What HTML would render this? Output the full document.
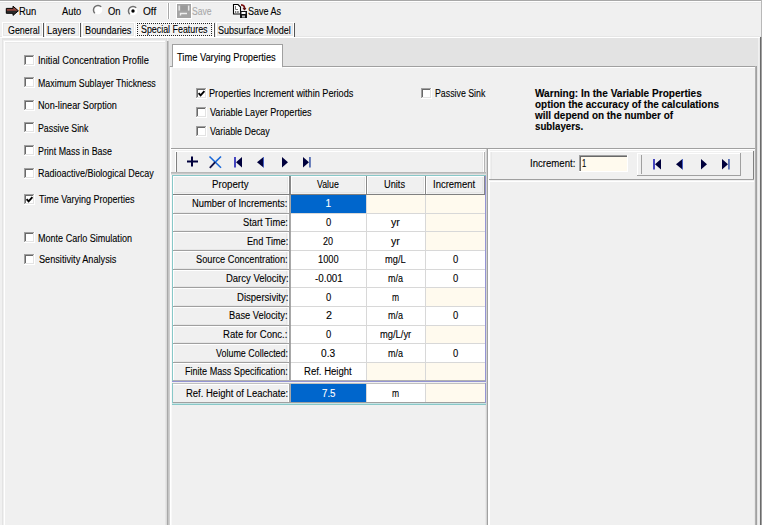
<!DOCTYPE html>
<html><head><meta charset="utf-8"><style>
html,body{margin:0;padding:0}
body{width:763px;height:525px;overflow:hidden;position:relative;background:#f0f0f0;font-family:'Liberation Sans', sans-serif;font-size:10px}
body>div,body>span{position:absolute}
span{white-space:nowrap;line-height:12px;-webkit-text-stroke:0.1px currentColor}
</style></head><body>
<div style="left:0px;top:0px;width:763px;height:1px;background:#a8a8a8;"></div>
<div style="left:0px;top:1px;width:761px;height:1px;background:#ffffff;"></div>
<div style="left:0px;top:2px;width:761px;height:1px;background:#e8e8e8;"></div>
<div style="left:761px;top:0px;width:1px;height:37px;background:#b8b8b8;"></div>
<div style="left:762px;top:0px;width:1px;height:525px;background:#ffffff;"></div>
<svg style="position:absolute;left:5px;top:5px;overflow:visible" width="15" height="12" viewBox="0 0 15 12"><defs><linearGradient id="ag" x1="0" y1="0" x2="0" y2="1"><stop offset="0" stop-color="#a05a50"/><stop offset="0.45" stop-color="#8a4038"/><stop offset="0.55" stop-color="#262626"/><stop offset="1" stop-color="#3a3a3a"/></linearGradient></defs><path d="M1.3 3.4 L8 3.4 L8 1.2 L13.4 5.8 L8 10.4 L8 8.3 L1.3 8.3 Z" fill="url(#ag)" stroke="#000" stroke-width="1" stroke-linejoin="miter"/></svg>
<span style="left:19.06px;top:6px;font-weight:normal;font-size:10.0px;color:#000;transform:scaleX(0.9412);transform-origin:0 0">Run</span>
<span style="left:61.60px;top:6px;font-weight:normal;font-size:10.0px;color:#000;transform:scaleX(0.9300);transform-origin:0 0">Auto</span>
<svg style="position:absolute;left:92.4px;top:4.4px;overflow:visible" width="12" height="12" viewBox="0 0 12 12"><circle cx="6" cy="6" r="4.3" fill="#fff"/><path d="M2.8 9.2 A4.5 4.5 0 0 1 9.2 2.8" fill="none" stroke="#707070" stroke-width="1.5"/></svg>
<span style="left:107.90px;top:6px;font-weight:normal;font-size:10.0px;color:#000;transform:scaleX(0.9385);transform-origin:0 0">On</span>
<svg style="position:absolute;left:127.4px;top:4.5px;overflow:visible" width="12" height="12" viewBox="0 0 12 12"><circle cx="6" cy="6" r="4.3" fill="#fff"/><path d="M2.8 9.2 A4.5 4.5 0 0 1 9.2 2.8" fill="none" stroke="#707070" stroke-width="1.5"/><circle cx="6" cy="6" r="1.7" fill="#000"/></svg>
<span style="left:142.70px;top:6px;font-weight:normal;font-size:10.0px;color:#000;transform:scaleX(1.0071);transform-origin:0 0">Off</span>
<div style="left:167px;top:3px;width:1px;height:16px;background:#ffffff;"></div>
<div style="left:168px;top:3px;width:1px;height:16px;background:#a8a8a8;"></div>
<div style="left:169px;top:3px;width:1px;height:16px;background:#ffffff;"></div>
<svg style="position:absolute;left:176px;top:3px;overflow:visible" width="16" height="16" viewBox="0 0 16 16"><rect x="0.5" y="0.5" width="15" height="15" fill="none" stroke="#fff" stroke-width="1"/><rect x="1" y="1" width="14" height="14" fill="#a4a4a4"/><rect x="2.5" y="2.6" width="1.4" height="5" fill="#e8e8e8"/><rect x="12" y="2.6" width="1.4" height="5" fill="#e8e8e8"/><rect x="5" y="2.5" width="6" height="5" fill="#9a9a9a"/><path d="M4.5 12.5 L4.5 10.5 L11 10.5" fill="none" stroke="#f0f0f0" stroke-width="1.4"/></svg>
<span style="left:192.00px;top:6px;font-weight:normal;font-size:10.0px;color:#a8a8a8;transform:scaleX(0.8565);transform-origin:0 0">Save</span>
<svg style="position:absolute;left:232px;top:3px;overflow:visible" width="16" height="16" viewBox="0 0 16 16"><path d="M1.5 1.5 L6 1.5 L8.5 4 L8.5 11 L1.5 11 Z" fill="#fff" stroke="#000" stroke-width="1.1"/><path d="M3.5 3 L3.5 6.5 L6 6.5" fill="none" stroke="#777" stroke-width="1"/><rect x="3" y="8.4" width="1.3" height="1.2" fill="#222"/><rect x="5.2" y="8.4" width="1.5" height="1.2" fill="#222"/><path d="M9 1.8 Q13 1.8 12.5 6.5" fill="none" stroke="#7a1010" stroke-width="1.8"/><path d="M10.5 5 L12.6 7.5 L14.4 5" fill="#5a1010"/><rect x="8" y="8" width="7" height="7" fill="#111"/><rect x="9.5" y="9" width="4" height="2" fill="#fff"/><rect x="10" y="12.5" width="3" height="2" fill="#bbb"/></svg>
<span style="left:247.50px;top:6px;font-weight:normal;font-size:10.0px;color:#000;transform:scaleX(0.9000);transform-origin:0 0">Save As</span>
<div style="left:0px;top:36px;width:761px;height:1px;background:#e6e6e6;"></div>
<div style="left:2px;top:22px;width:41px;height:15px;background:transparent;border:1px solid #ffffff;box-sizing:border-box"></div>
<div style="left:3px;top:23px;width:39px;height:13px;background:transparent;border:1px solid #e6e6e6;box-sizing:border-box"></div>
<div style="left:45px;top:22px;width:35px;height:15px;background:transparent;border:1px solid #ffffff;box-sizing:border-box"></div>
<div style="left:46px;top:23px;width:33px;height:13px;background:transparent;border:1px solid #e6e6e6;box-sizing:border-box"></div>
<div style="left:82px;top:22px;width:53px;height:15px;background:transparent;border:1px solid #ffffff;box-sizing:border-box"></div>
<div style="left:83px;top:23px;width:51px;height:13px;background:transparent;border:1px solid #e6e6e6;box-sizing:border-box"></div>
<div style="left:216px;top:22px;width:78px;height:15px;background:transparent;border:1px solid #ffffff;box-sizing:border-box"></div>
<div style="left:217px;top:23px;width:76px;height:13px;background:transparent;border:1px solid #e6e6e6;box-sizing:border-box"></div>
<div style="left:43px;top:23px;width:1px;height:14px;background:#555555;"></div>
<div style="left:80px;top:23px;width:1px;height:14px;background:#555555;"></div>
<div style="left:214px;top:23px;width:1px;height:14px;background:#555555;"></div>
<div style="left:294px;top:23px;width:1px;height:14px;background:#555555;"></div>
<span style="left:7.50px;top:25px;font-weight:normal;font-size:10.0px;color:#000;transform:scaleX(0.8886);transform-origin:0 0">General</span>
<span style="left:47.36px;top:25px;font-weight:normal;font-size:10.0px;color:#000;transform:scaleX(0.9414);transform-origin:0 0">Layers</span>
<span style="left:84.58px;top:25px;font-weight:normal;font-size:10.0px;color:#000;transform:scaleX(0.9184);transform-origin:0 0">Boundaries</span>
<div style="left:136px;top:22px;width:78px;height:15px;background:#f4f4f4;border:1px solid #ffffff;box-sizing:border-box"></div>
<div style="left:137px;top:23px;width:75px;height:13px;background:transparent;border:1px dotted #222;box-sizing:border-box"></div>
<span style="left:141.00px;top:24px;font-weight:normal;font-size:10.0px;color:#000;transform:scaleX(0.8867);transform-origin:0 0">Special Features</span>
<span style="left:217.80px;top:25px;font-weight:normal;font-size:10.0px;color:#000;transform:scaleX(0.9025);transform-origin:0 0">Subsurface Model</span>
<div style="left:0px;top:37px;width:760px;height:1px;background:#ffffff;"></div>
<div style="left:760px;top:37px;width:1px;height:488px;background:#6a6a6a;"></div>
<div style="left:761px;top:37px;width:1px;height:488px;background:#a0a0a0;"></div>
<div style="left:758px;top:38px;width:1px;height:487px;background:#f0f0f0;"></div>
<div style="left:759px;top:38px;width:1px;height:487px;background:#e8e8e8;"></div>
<div style="left:2px;top:38px;width:164px;height:1px;background:#e3e3e3;"></div>
<div style="left:2px;top:39px;width:164px;height:1px;background:#e3e3e3;"></div>
<div style="left:2px;top:38px;width:1px;height:487px;background:#e3e3e3;"></div>
<div style="left:4px;top:41px;width:161px;height:1px;background:#ffffff;"></div>
<div style="left:4px;top:41px;width:1px;height:484px;background:#ffffff;"></div>
<div style="left:5px;top:42px;width:160px;height:1px;background:#e8e8e8;"></div>
<div style="left:165px;top:38px;width:1px;height:487px;background:#e6e6e6;"></div>
<div style="left:24px;top:55px;width:11px;height:11px;background:#ffffff;"></div>
<div style="left:24px;top:55px;width:10px;height:1px;background:#a0a0a0;"></div>
<div style="left:24px;top:55px;width:1px;height:10px;background:#a0a0a0;"></div>
<div style="left:25px;top:56px;width:8px;height:1px;background:#696969;"></div>
<div style="left:25px;top:56px;width:1px;height:8px;background:#696969;"></div>
<div style="left:25px;top:64px;width:9px;height:1px;background:#e3e3e3;"></div>
<div style="left:33px;top:56px;width:1px;height:9px;background:#e3e3e3;"></div>
<span style="left:37.57px;top:55px;font-weight:normal;font-size:10.0px;color:#000;transform:scaleX(0.9271);transform-origin:0 0">Initial Concentration Profile</span>
<div style="left:24px;top:77px;width:11px;height:11px;background:#ffffff;"></div>
<div style="left:24px;top:77px;width:10px;height:1px;background:#a0a0a0;"></div>
<div style="left:24px;top:77px;width:1px;height:10px;background:#a0a0a0;"></div>
<div style="left:25px;top:78px;width:8px;height:1px;background:#696969;"></div>
<div style="left:25px;top:78px;width:1px;height:8px;background:#696969;"></div>
<div style="left:25px;top:86px;width:9px;height:1px;background:#e3e3e3;"></div>
<div style="left:33px;top:78px;width:1px;height:9px;background:#e3e3e3;"></div>
<span style="left:37.62px;top:78px;font-weight:normal;font-size:10.0px;color:#000;transform:scaleX(0.8841);transform-origin:0 0">Maximum Sublayer Thickness</span>
<div style="left:24px;top:100px;width:11px;height:11px;background:#ffffff;"></div>
<div style="left:24px;top:100px;width:10px;height:1px;background:#a0a0a0;"></div>
<div style="left:24px;top:100px;width:1px;height:10px;background:#a0a0a0;"></div>
<div style="left:25px;top:101px;width:8px;height:1px;background:#696969;"></div>
<div style="left:25px;top:101px;width:1px;height:8px;background:#696969;"></div>
<div style="left:25px;top:109px;width:9px;height:1px;background:#e3e3e3;"></div>
<div style="left:33px;top:101px;width:1px;height:9px;background:#e3e3e3;"></div>
<span style="left:37.58px;top:100px;font-weight:normal;font-size:10.0px;color:#000;transform:scaleX(0.9165);transform-origin:0 0">Non-linear Sorption</span>
<div style="left:24px;top:122px;width:11px;height:11px;background:#ffffff;"></div>
<div style="left:24px;top:122px;width:10px;height:1px;background:#a0a0a0;"></div>
<div style="left:24px;top:122px;width:1px;height:10px;background:#a0a0a0;"></div>
<div style="left:25px;top:123px;width:8px;height:1px;background:#696969;"></div>
<div style="left:25px;top:123px;width:1px;height:8px;background:#696969;"></div>
<div style="left:25px;top:131px;width:9px;height:1px;background:#e3e3e3;"></div>
<div style="left:33px;top:123px;width:1px;height:9px;background:#e3e3e3;"></div>
<span style="left:37.62px;top:123px;font-weight:normal;font-size:10.0px;color:#000;transform:scaleX(0.8804);transform-origin:0 0">Passive Sink</span>
<div style="left:24px;top:145px;width:11px;height:11px;background:#ffffff;"></div>
<div style="left:24px;top:145px;width:10px;height:1px;background:#a0a0a0;"></div>
<div style="left:24px;top:145px;width:1px;height:10px;background:#a0a0a0;"></div>
<div style="left:25px;top:146px;width:8px;height:1px;background:#696969;"></div>
<div style="left:25px;top:146px;width:1px;height:8px;background:#696969;"></div>
<div style="left:25px;top:154px;width:9px;height:1px;background:#e3e3e3;"></div>
<div style="left:33px;top:146px;width:1px;height:9px;background:#e3e3e3;"></div>
<span style="left:37.61px;top:146px;font-weight:normal;font-size:10.0px;color:#000;transform:scaleX(0.8854);transform-origin:0 0">Print Mass in Base</span>
<div style="left:24px;top:168px;width:11px;height:11px;background:#ffffff;"></div>
<div style="left:24px;top:168px;width:10px;height:1px;background:#a0a0a0;"></div>
<div style="left:24px;top:168px;width:1px;height:10px;background:#a0a0a0;"></div>
<div style="left:25px;top:169px;width:8px;height:1px;background:#696969;"></div>
<div style="left:25px;top:169px;width:1px;height:8px;background:#696969;"></div>
<div style="left:25px;top:177px;width:9px;height:1px;background:#e3e3e3;"></div>
<div style="left:33px;top:169px;width:1px;height:9px;background:#e3e3e3;"></div>
<span style="left:37.60px;top:168px;font-weight:normal;font-size:10.0px;color:#000;transform:scaleX(0.8977);transform-origin:0 0">Radioactive/Biological Decay</span>
<div style="left:24px;top:194px;width:11px;height:11px;background:#ffffff;"></div>
<div style="left:24px;top:194px;width:10px;height:1px;background:#a0a0a0;"></div>
<div style="left:24px;top:194px;width:1px;height:10px;background:#a0a0a0;"></div>
<div style="left:25px;top:195px;width:8px;height:1px;background:#696969;"></div>
<div style="left:25px;top:195px;width:1px;height:8px;background:#696969;"></div>
<div style="left:25px;top:203px;width:9px;height:1px;background:#e3e3e3;"></div>
<div style="left:33px;top:195px;width:1px;height:9px;background:#e3e3e3;"></div>
<svg style="position:absolute;left:24px;top:194px;overflow:visible" width="11" height="11" viewBox="0 0 11 11"><path d="M2.6 5.2 L4.6 7.4 L8.4 3.2" fill="none" stroke="#000" stroke-width="1.9"/></svg>
<span style="left:38.50px;top:194px;font-weight:normal;font-size:10.0px;color:#000;transform:scaleX(0.8991);transform-origin:0 0">Time Varying Properties</span>
<div style="left:24px;top:232px;width:11px;height:11px;background:#ffffff;"></div>
<div style="left:24px;top:232px;width:10px;height:1px;background:#a0a0a0;"></div>
<div style="left:24px;top:232px;width:1px;height:10px;background:#a0a0a0;"></div>
<div style="left:25px;top:233px;width:8px;height:1px;background:#696969;"></div>
<div style="left:25px;top:233px;width:1px;height:8px;background:#696969;"></div>
<div style="left:25px;top:241px;width:9px;height:1px;background:#e3e3e3;"></div>
<div style="left:33px;top:233px;width:1px;height:9px;background:#e3e3e3;"></div>
<span style="left:37.60px;top:233px;font-weight:normal;font-size:10.0px;color:#000;transform:scaleX(0.9039);transform-origin:0 0">Monte Carlo Simulation</span>
<div style="left:24px;top:254px;width:11px;height:11px;background:#ffffff;"></div>
<div style="left:24px;top:254px;width:10px;height:1px;background:#a0a0a0;"></div>
<div style="left:24px;top:254px;width:1px;height:10px;background:#a0a0a0;"></div>
<div style="left:25px;top:255px;width:8px;height:1px;background:#696969;"></div>
<div style="left:25px;top:255px;width:1px;height:8px;background:#696969;"></div>
<div style="left:25px;top:263px;width:9px;height:1px;background:#e3e3e3;"></div>
<div style="left:33px;top:255px;width:1px;height:9px;background:#e3e3e3;"></div>
<span style="left:38.50px;top:254px;font-weight:normal;font-size:10.0px;color:#000;transform:scaleX(0.9155);transform-origin:0 0">Sensitivity Analysis</span>
<div style="left:166px;top:38px;width:1px;height:487px;background:#dcdcdc;"></div>
<div style="left:168px;top:38px;width:590px;height:28px;background:#e3e3e3;"></div>
<div style="left:167px;top:41px;width:1px;height:484px;background:#a8a8a8;"></div>
<div style="left:168px;top:41px;width:1px;height:484px;background:#c4c4c4;"></div>
<div style="left:169px;top:66px;width:1px;height:459px;background:#d0d0d0;"></div>
<div style="left:172px;top:44px;width:111px;height:23px;background:#ffffff;"></div>
<div style="left:172px;top:44px;width:111px;height:1px;background:#a0a0a0;"></div>
<div style="left:172px;top:44px;width:1px;height:23px;background:#a0a0a0;"></div>
<div style="left:282px;top:44px;width:1px;height:23px;background:#a0a0a0;"></div>
<span style="left:177.40px;top:52px;font-weight:normal;font-size:10.0px;color:#000;transform:scaleX(0.9302);transform-origin:0 0">Time Varying Properties</span>
<div style="left:170px;top:66px;width:2px;height:1px;background:#a0a0a0;"></div>
<div style="left:283px;top:66px;width:474px;height:1px;background:#a0a0a0;"></div>
<div style="left:173px;top:67px;width:109px;height:1px;background:#ffffff;"></div>
<div style="left:170px;top:67px;width:2px;height:1px;background:#ffffff;"></div>
<div style="left:283px;top:67px;width:472px;height:1px;background:#ffffff;"></div>
<div style="left:170px;top:67px;width:1px;height:458px;background:#ffffff;"></div>
<div style="left:171px;top:67px;width:1px;height:458px;background:#f8f8f8;"></div>
<div style="left:755px;top:66px;width:1px;height:459px;background:#b0b0b0;"></div>
<div style="left:756px;top:66px;width:1px;height:459px;background:#a0a0a0;"></div>
<div style="left:757px;top:66px;width:1px;height:459px;background:#e3e3e3;"></div>
<div style="left:196px;top:88px;width:11px;height:11px;background:#ffffff;"></div>
<div style="left:196px;top:88px;width:10px;height:1px;background:#a0a0a0;"></div>
<div style="left:196px;top:88px;width:1px;height:10px;background:#a0a0a0;"></div>
<div style="left:197px;top:89px;width:8px;height:1px;background:#696969;"></div>
<div style="left:197px;top:89px;width:1px;height:8px;background:#696969;"></div>
<div style="left:197px;top:97px;width:9px;height:1px;background:#e3e3e3;"></div>
<div style="left:205px;top:89px;width:1px;height:9px;background:#e3e3e3;"></div>
<svg style="position:absolute;left:196px;top:88px;overflow:visible" width="11" height="11" viewBox="0 0 11 11"><path d="M2.6 5.2 L4.6 7.4 L8.4 3.2" fill="none" stroke="#000" stroke-width="1.9"/></svg>
<span style="left:209.39px;top:88px;font-weight:normal;font-size:10.0px;color:#000;transform:scaleX(0.9146);transform-origin:0 0">Properties Increment within Periods</span>
<div style="left:196px;top:107px;width:11px;height:11px;background:#ffffff;"></div>
<div style="left:196px;top:107px;width:10px;height:1px;background:#a0a0a0;"></div>
<div style="left:196px;top:107px;width:1px;height:10px;background:#a0a0a0;"></div>
<div style="left:197px;top:108px;width:8px;height:1px;background:#696969;"></div>
<div style="left:197px;top:108px;width:1px;height:8px;background:#696969;"></div>
<div style="left:197px;top:116px;width:9px;height:1px;background:#e3e3e3;"></div>
<div style="left:205px;top:108px;width:1px;height:9px;background:#e3e3e3;"></div>
<span style="left:210.30px;top:107px;font-weight:normal;font-size:10.0px;color:#000;transform:scaleX(0.9054);transform-origin:0 0">Variable Layer Properties</span>
<div style="left:196px;top:126px;width:11px;height:11px;background:#ffffff;"></div>
<div style="left:196px;top:126px;width:10px;height:1px;background:#a0a0a0;"></div>
<div style="left:196px;top:126px;width:1px;height:10px;background:#a0a0a0;"></div>
<div style="left:197px;top:127px;width:8px;height:1px;background:#696969;"></div>
<div style="left:197px;top:127px;width:1px;height:8px;background:#696969;"></div>
<div style="left:197px;top:135px;width:9px;height:1px;background:#e3e3e3;"></div>
<div style="left:205px;top:127px;width:1px;height:9px;background:#e3e3e3;"></div>
<span style="left:210.30px;top:126px;font-weight:normal;font-size:10.0px;color:#000;transform:scaleX(0.8910);transform-origin:0 0">Variable Decay</span>
<div style="left:421px;top:88px;width:11px;height:11px;background:#ffffff;"></div>
<div style="left:421px;top:88px;width:10px;height:1px;background:#a0a0a0;"></div>
<div style="left:421px;top:88px;width:1px;height:10px;background:#a0a0a0;"></div>
<div style="left:422px;top:89px;width:8px;height:1px;background:#696969;"></div>
<div style="left:422px;top:89px;width:1px;height:8px;background:#696969;"></div>
<div style="left:422px;top:97px;width:9px;height:1px;background:#e3e3e3;"></div>
<div style="left:430px;top:89px;width:1px;height:9px;background:#e3e3e3;"></div>
<span style="left:434.82px;top:88px;font-weight:normal;font-size:10.0px;color:#000;transform:scaleX(0.8786);transform-origin:0 0">Passive Sink</span>
<span style="left:534.70px;top:88px;font-weight:bold;font-size:10.0px;color:#000;transform:scaleX(1.0060);transform-origin:0 0">Warning: In the Variable Properties</span>
<span style="left:534.70px;top:99px;font-weight:bold;font-size:10.0px;color:#000;transform:scaleX(0.9946);transform-origin:0 0">option the accuracy of the calculations</span>
<span style="left:534.70px;top:110px;font-weight:bold;font-size:10.0px;color:#000;transform:scaleX(0.9942);transform-origin:0 0">will depend on the number of</span>
<span style="left:534.70px;top:121px;font-weight:bold;font-size:10.0px;color:#000;transform:scaleX(0.9735);transform-origin:0 0">sublayers.</span>
<div style="left:171px;top:148px;width:584px;height:1px;background:#a0a0a0;"></div>
<div style="left:171px;top:149px;width:584px;height:1px;background:#ffffff;"></div>
<div style="left:482px;top:151px;width:1px;height:21px;background:#e8e8e8;"></div>
<div style="left:483px;top:151px;width:1px;height:21px;background:#ffffff;"></div>
<div style="left:484px;top:151px;width:1px;height:21px;background:#b4b4b4;"></div>
<div style="left:485px;top:151px;width:1px;height:374px;background:#e8e8e8;"></div>
<div style="left:486px;top:149px;width:1px;height:376px;background:#d4d4d4;"></div>
<div style="left:487px;top:149px;width:1px;height:376px;background:#a0a0a0;"></div>
<div style="left:488px;top:149px;width:1px;height:376px;background:#ffffff;"></div>
<div style="left:489px;top:149px;width:1px;height:376px;background:#fafafa;"></div>
<div style="left:491px;top:151px;width:1px;height:28px;background:#e8e8e8;"></div>
<div style="left:175px;top:151px;width:310px;height:1px;background:#ffffff;"></div>
<div style="left:175px;top:151px;width:1px;height:21px;background:#ffffff;"></div>
<div style="left:176px;top:152px;width:1px;height:20px;background:#808080;"></div>
<div style="left:171px;top:172px;width:315px;height:1px;background:#b8b8b8;"></div>
<div style="left:171px;top:173px;width:315px;height:1px;background:#c8c8c8;"></div>
<div style="left:171px;top:174px;width:315px;height:1px;background:#e0e0e0;"></div>
<svg style="position:absolute;left:186px;top:156px;overflow:visible" width="13" height="12" viewBox="0 0 13 12"><path d="M1 5.5 H12 M6 0.5 V10.5" stroke="#00003c" stroke-width="2"/></svg>
<svg style="position:absolute;left:208px;top:155px;overflow:visible" width="15" height="14" viewBox="0 0 15 14"><path d="M1.5 1.5 L13 12.8" stroke="#1a68d8" stroke-width="1.6"/><path d="M13 1.5 L7 7.3" stroke="#1a68d8" stroke-width="1.6"/><path d="M7.2 7.2 L1.8 12.8" stroke="#10104a" stroke-width="1.9"/></svg>
<svg style="position:absolute;left:234px;top:157px;overflow:visible" width="10" height="11" viewBox="0 0 10 11"><rect x="0" y="0" width="2" height="10.5" fill="#4646c0"/><path d="M2 5.25 L8 0 L8 10.5 Z" fill="#00003c"/></svg>
<svg style="position:absolute;left:256.5px;top:157px;overflow:visible" width="8" height="11" viewBox="0 0 8 11"><path d="M0 5.25 L6.5 0 L6.5 10.5 Z" fill="#00003c"/><rect x="6" y="0" width="0.8" height="10.5" fill="#3a5ad0"/></svg>
<svg style="position:absolute;left:282px;top:157px;overflow:visible" width="8" height="11" viewBox="0 0 8 11"><path d="M0 0 L6 5.25 L0 10.5 Z" fill="#00003c"/></svg>
<svg style="position:absolute;left:302.7px;top:157px;overflow:visible" width="10" height="11" viewBox="0 0 10 11"><path d="M0 0 L6 5.25 L0 10.5 Z" fill="#00003c"/><rect x="6.3" y="0" width="1.3" height="10.5" fill="#1c3c9c"/></svg>
<div style="left:172px;top:175px;width:314px;height:1px;background:#88c8c8;"></div>
<div style="left:172px;top:175px;width:1px;height:207px;background:#88c8c8;"></div>
<div style="left:485px;top:176px;width:1px;height:206px;background:#9494d4;"></div>
<div style="left:173px;top:176px;width:312px;height:18px;background:#f0f0f0;"></div>
<div style="left:173px;top:176px;width:312px;height:1px;background:#ffffff;"></div>
<div style="left:173px;top:176px;width:1px;height:18px;background:#ffffff;"></div>
<div style="left:174px;top:192px;width:114px;height:1px;background:#e6e6e6;"></div>
<div style="left:287px;top:177px;width:1px;height:16px;background:#e6e6e6;"></div>
<div style="left:292px;top:192px;width:73px;height:1px;background:#e6e6e6;"></div>
<div style="left:364px;top:177px;width:1px;height:16px;background:#e6e6e6;"></div>
<div style="left:368px;top:192px;width:56px;height:1px;background:#e6e6e6;"></div>
<div style="left:423px;top:177px;width:1px;height:16px;background:#e6e6e6;"></div>
<div style="left:427px;top:192px;width:56px;height:1px;background:#e6e6e6;"></div>
<div style="left:482px;top:177px;width:1px;height:16px;background:#e6e6e6;"></div>
<div style="left:173px;top:194px;width:312px;height:1px;background:#808080;"></div>
<div style="left:289px;top:176px;width:1px;height:18px;background:#888888;"></div>
<div style="left:290px;top:176px;width:1px;height:18px;background:#888888;"></div>
<div style="left:366px;top:176px;width:1px;height:18px;background:#888888;"></div>
<div style="left:425px;top:176px;width:1px;height:18px;background:#888888;"></div>
<div style="left:484px;top:176px;width:1px;height:18px;background:#888888;"></div>
<div style="left:291px;top:176px;width:1px;height:18px;background:#ffffff;"></div>
<div style="left:367px;top:176px;width:1px;height:18px;background:#ffffff;"></div>
<div style="left:426px;top:176px;width:1px;height:18px;background:#ffffff;"></div>
<div style="left:288px;top:176px;width:1px;height:18px;background:#ffffff;"></div>
<div style="left:365px;top:176px;width:1px;height:18px;background:#ffffff;"></div>
<div style="left:424px;top:176px;width:1px;height:18px;background:#ffffff;"></div>
<span style="left:211.74px;top:179px;font-weight:normal;font-size:10.0px;color:#000;transform:scaleX(0.9649);transform-origin:0 0">Property</span>
<span style="left:317.00px;top:179px;font-weight:normal;font-size:10.0px;color:#000;transform:scaleX(0.8760);transform-origin:0 0">Value</span>
<span style="left:384.48px;top:179px;font-weight:normal;font-size:10.0px;color:#000;transform:scaleX(0.9227);transform-origin:0 0">Units</span>
<span style="left:433.05px;top:179px;font-weight:normal;font-size:10.0px;color:#000;transform:scaleX(0.9477);transform-origin:0 0">Increment</span>
<div style="left:173px;top:195px;width:116px;height:18px;background:#f0f0f0;"></div>
<div style="left:173px;top:195px;width:115px;height:1px;background:#ffffff;"></div>
<div style="left:173px;top:195px;width:1px;height:18px;background:#ffffff;"></div>
<div style="left:174px;top:212px;width:113px;height:1px;background:#e6e6e6;"></div>
<div style="left:286px;top:196px;width:1px;height:17px;background:#e6e6e6;"></div>
<div style="left:288px;top:195px;width:1px;height:18px;background:#ffffff;"></div>
<div style="left:289px;top:195px;width:1px;height:18px;background:#a0a0a0;"></div>
<div style="left:290px;top:195px;width:1px;height:18px;background:#a8a8a8;"></div>
<div style="left:173px;top:213px;width:118px;height:1px;background:#a0a0a0;"></div>
<div style="left:291px;top:195px;width:75px;height:18px;background:#0066cc;"></div>
<div style="left:367px;top:195px;width:58px;height:18px;background:#fffaee;"></div>
<div style="left:426px;top:195px;width:59px;height:18px;background:#fffaee;"></div>
<div style="left:291px;top:213px;width:194px;height:1px;background:#d8d8d8;"></div>
<div style="left:366px;top:195px;width:1px;height:19px;background:#d8d8d8;"></div>
<div style="left:425px;top:195px;width:1px;height:19px;background:#d8d8d8;"></div>
<span style="left:192.46px;top:198px;font-weight:normal;font-size:10.0px;color:#000;transform:scaleX(0.9380);transform-origin:0 0">Number of Increments:</span>
<span style="left:325.40px;top:198px;font-weight:normal;font-size:10.0px;color:#ffffff;transform:scaleX(1.0000);transform-origin:0 0">1</span>
<div style="left:173px;top:214px;width:116px;height:17px;background:#f0f0f0;"></div>
<div style="left:173px;top:214px;width:115px;height:1px;background:#ffffff;"></div>
<div style="left:173px;top:214px;width:1px;height:17px;background:#ffffff;"></div>
<div style="left:174px;top:230px;width:113px;height:1px;background:#e6e6e6;"></div>
<div style="left:286px;top:215px;width:1px;height:16px;background:#e6e6e6;"></div>
<div style="left:288px;top:214px;width:1px;height:17px;background:#ffffff;"></div>
<div style="left:289px;top:214px;width:1px;height:17px;background:#a0a0a0;"></div>
<div style="left:290px;top:214px;width:1px;height:17px;background:#a8a8a8;"></div>
<div style="left:173px;top:231px;width:118px;height:1px;background:#a0a0a0;"></div>
<div style="left:291px;top:214px;width:75px;height:17px;background:#ffffff;"></div>
<div style="left:367px;top:214px;width:58px;height:17px;background:#ffffff;"></div>
<div style="left:426px;top:214px;width:59px;height:17px;background:#fffaee;"></div>
<div style="left:291px;top:231px;width:194px;height:1px;background:#d8d8d8;"></div>
<div style="left:366px;top:214px;width:1px;height:18px;background:#d8d8d8;"></div>
<div style="left:425px;top:214px;width:1px;height:18px;background:#d8d8d8;"></div>
<span style="left:242.60px;top:217px;font-weight:normal;font-size:10.0px;color:#000;transform:scaleX(0.9292);transform-origin:0 0">Start Time:</span>
<span style="left:326.05px;top:217px;font-weight:normal;font-size:10.0px;color:#000;transform:scaleX(0.9400);transform-origin:0 0">0</span>
<span style="left:391.25px;top:217px;font-weight:normal;font-size:10.0px;color:#000;transform:scaleX(1.0625);transform-origin:0 0">yr</span>
<div style="left:173px;top:232px;width:116px;height:18px;background:#f0f0f0;"></div>
<div style="left:173px;top:232px;width:115px;height:1px;background:#ffffff;"></div>
<div style="left:173px;top:232px;width:1px;height:18px;background:#ffffff;"></div>
<div style="left:174px;top:249px;width:113px;height:1px;background:#e6e6e6;"></div>
<div style="left:286px;top:233px;width:1px;height:17px;background:#e6e6e6;"></div>
<div style="left:288px;top:232px;width:1px;height:18px;background:#ffffff;"></div>
<div style="left:289px;top:232px;width:1px;height:18px;background:#a0a0a0;"></div>
<div style="left:290px;top:232px;width:1px;height:18px;background:#a8a8a8;"></div>
<div style="left:173px;top:250px;width:118px;height:1px;background:#a0a0a0;"></div>
<div style="left:291px;top:232px;width:75px;height:18px;background:#ffffff;"></div>
<div style="left:367px;top:232px;width:58px;height:18px;background:#ffffff;"></div>
<div style="left:426px;top:232px;width:59px;height:18px;background:#fffaee;"></div>
<div style="left:291px;top:250px;width:194px;height:1px;background:#d8d8d8;"></div>
<div style="left:366px;top:232px;width:1px;height:19px;background:#d8d8d8;"></div>
<div style="left:425px;top:232px;width:1px;height:19px;background:#d8d8d8;"></div>
<span style="left:246.88px;top:236px;font-weight:normal;font-size:10.0px;color:#000;transform:scaleX(0.9163);transform-origin:0 0">End Time:</span>
<span style="left:323.45px;top:236px;font-weight:normal;font-size:10.0px;color:#000;transform:scaleX(0.9000);transform-origin:0 0">20</span>
<span style="left:391.25px;top:236px;font-weight:normal;font-size:10.0px;color:#000;transform:scaleX(1.0625);transform-origin:0 0">yr</span>
<div style="left:173px;top:251px;width:116px;height:18px;background:#f0f0f0;"></div>
<div style="left:173px;top:251px;width:115px;height:1px;background:#ffffff;"></div>
<div style="left:173px;top:251px;width:1px;height:18px;background:#ffffff;"></div>
<div style="left:174px;top:268px;width:113px;height:1px;background:#e6e6e6;"></div>
<div style="left:286px;top:252px;width:1px;height:17px;background:#e6e6e6;"></div>
<div style="left:288px;top:251px;width:1px;height:18px;background:#ffffff;"></div>
<div style="left:289px;top:251px;width:1px;height:18px;background:#a0a0a0;"></div>
<div style="left:290px;top:251px;width:1px;height:18px;background:#a8a8a8;"></div>
<div style="left:173px;top:269px;width:118px;height:1px;background:#a0a0a0;"></div>
<div style="left:291px;top:251px;width:75px;height:18px;background:#ffffff;"></div>
<div style="left:367px;top:251px;width:58px;height:18px;background:#ffffff;"></div>
<div style="left:426px;top:251px;width:59px;height:18px;background:#ffffff;"></div>
<div style="left:291px;top:269px;width:194px;height:1px;background:#d8d8d8;"></div>
<div style="left:366px;top:251px;width:1px;height:19px;background:#d8d8d8;"></div>
<div style="left:425px;top:251px;width:1px;height:19px;background:#d8d8d8;"></div>
<span style="left:196.00px;top:254px;font-weight:normal;font-size:10.0px;color:#000;transform:scaleX(0.9212);transform-origin:0 0">Source Concentration:</span>
<span style="left:317.78px;top:254px;font-weight:normal;font-size:10.0px;color:#000;transform:scaleX(0.9238);transform-origin:0 0">1000</span>
<span style="left:385.30px;top:254px;font-weight:normal;font-size:10.0px;color:#000;transform:scaleX(0.9273);transform-origin:0 0">mg/L</span>
<span style="left:452.55px;top:254px;font-weight:normal;font-size:10.0px;color:#000;transform:scaleX(0.9400);transform-origin:0 0">0</span>
<div style="left:173px;top:270px;width:116px;height:17px;background:#f0f0f0;"></div>
<div style="left:173px;top:270px;width:115px;height:1px;background:#ffffff;"></div>
<div style="left:173px;top:270px;width:1px;height:17px;background:#ffffff;"></div>
<div style="left:174px;top:286px;width:113px;height:1px;background:#e6e6e6;"></div>
<div style="left:286px;top:271px;width:1px;height:16px;background:#e6e6e6;"></div>
<div style="left:288px;top:270px;width:1px;height:17px;background:#ffffff;"></div>
<div style="left:289px;top:270px;width:1px;height:17px;background:#a0a0a0;"></div>
<div style="left:290px;top:270px;width:1px;height:17px;background:#a8a8a8;"></div>
<div style="left:173px;top:287px;width:118px;height:1px;background:#a0a0a0;"></div>
<div style="left:291px;top:270px;width:75px;height:17px;background:#ffffff;"></div>
<div style="left:367px;top:270px;width:58px;height:17px;background:#ffffff;"></div>
<div style="left:426px;top:270px;width:59px;height:17px;background:#ffffff;"></div>
<div style="left:291px;top:287px;width:194px;height:1px;background:#d8d8d8;"></div>
<div style="left:366px;top:270px;width:1px;height:18px;background:#d8d8d8;"></div>
<div style="left:425px;top:270px;width:1px;height:18px;background:#d8d8d8;"></div>
<span style="left:225.55px;top:273px;font-weight:normal;font-size:10.0px;color:#000;transform:scaleX(0.9484);transform-origin:0 0">Darcy Velocity:</span>
<span style="left:314.70px;top:273px;font-weight:normal;font-size:10.0px;color:#000;transform:scaleX(0.9786);transform-origin:0 0">-0.001</span>
<span style="left:387.85px;top:273px;font-weight:normal;font-size:10.0px;color:#000;transform:scaleX(0.9000);transform-origin:0 0">m/a</span>
<span style="left:452.55px;top:273px;font-weight:normal;font-size:10.0px;color:#000;transform:scaleX(0.9400);transform-origin:0 0">0</span>
<div style="left:173px;top:288px;width:116px;height:18px;background:#f0f0f0;"></div>
<div style="left:173px;top:288px;width:115px;height:1px;background:#ffffff;"></div>
<div style="left:173px;top:288px;width:1px;height:18px;background:#ffffff;"></div>
<div style="left:174px;top:305px;width:113px;height:1px;background:#e6e6e6;"></div>
<div style="left:286px;top:289px;width:1px;height:17px;background:#e6e6e6;"></div>
<div style="left:288px;top:288px;width:1px;height:18px;background:#ffffff;"></div>
<div style="left:289px;top:288px;width:1px;height:18px;background:#a0a0a0;"></div>
<div style="left:290px;top:288px;width:1px;height:18px;background:#a8a8a8;"></div>
<div style="left:173px;top:306px;width:118px;height:1px;background:#a0a0a0;"></div>
<div style="left:291px;top:288px;width:75px;height:18px;background:#ffffff;"></div>
<div style="left:367px;top:288px;width:58px;height:18px;background:#ffffff;"></div>
<div style="left:426px;top:288px;width:59px;height:18px;background:#fffaee;"></div>
<div style="left:291px;top:306px;width:194px;height:1px;background:#d8d8d8;"></div>
<div style="left:366px;top:288px;width:1px;height:19px;background:#d8d8d8;"></div>
<div style="left:425px;top:288px;width:1px;height:19px;background:#d8d8d8;"></div>
<span style="left:236.65px;top:292px;font-weight:normal;font-size:10.0px;color:#000;transform:scaleX(0.9538);transform-origin:0 0">Dispersivity:</span>
<span style="left:326.05px;top:292px;font-weight:normal;font-size:10.0px;color:#000;transform:scaleX(0.9400);transform-origin:0 0">0</span>
<span style="left:392.10px;top:292px;font-weight:normal;font-size:10.0px;color:#000;transform:scaleX(0.8500);transform-origin:0 0">m</span>
<div style="left:173px;top:307px;width:116px;height:18px;background:#f0f0f0;"></div>
<div style="left:173px;top:307px;width:115px;height:1px;background:#ffffff;"></div>
<div style="left:173px;top:307px;width:1px;height:18px;background:#ffffff;"></div>
<div style="left:174px;top:324px;width:113px;height:1px;background:#e6e6e6;"></div>
<div style="left:286px;top:308px;width:1px;height:17px;background:#e6e6e6;"></div>
<div style="left:288px;top:307px;width:1px;height:18px;background:#ffffff;"></div>
<div style="left:289px;top:307px;width:1px;height:18px;background:#a0a0a0;"></div>
<div style="left:290px;top:307px;width:1px;height:18px;background:#a8a8a8;"></div>
<div style="left:173px;top:325px;width:118px;height:1px;background:#a0a0a0;"></div>
<div style="left:291px;top:307px;width:75px;height:18px;background:#ffffff;"></div>
<div style="left:367px;top:307px;width:58px;height:18px;background:#ffffff;"></div>
<div style="left:426px;top:307px;width:59px;height:18px;background:#ffffff;"></div>
<div style="left:291px;top:325px;width:194px;height:1px;background:#d8d8d8;"></div>
<div style="left:366px;top:307px;width:1px;height:19px;background:#d8d8d8;"></div>
<div style="left:425px;top:307px;width:1px;height:19px;background:#d8d8d8;"></div>
<span style="left:229.47px;top:310px;font-weight:normal;font-size:10.0px;color:#000;transform:scaleX(0.9311);transform-origin:0 0">Base Velocity:</span>
<span style="left:325.70px;top:310px;font-weight:normal;font-size:10.0px;color:#000;transform:scaleX(1.0800);transform-origin:0 0">2</span>
<span style="left:387.85px;top:310px;font-weight:normal;font-size:10.0px;color:#000;transform:scaleX(0.9000);transform-origin:0 0">m/a</span>
<span style="left:452.55px;top:310px;font-weight:normal;font-size:10.0px;color:#000;transform:scaleX(0.9400);transform-origin:0 0">0</span>
<div style="left:173px;top:326px;width:116px;height:17px;background:#f0f0f0;"></div>
<div style="left:173px;top:326px;width:115px;height:1px;background:#ffffff;"></div>
<div style="left:173px;top:326px;width:1px;height:17px;background:#ffffff;"></div>
<div style="left:174px;top:342px;width:113px;height:1px;background:#e6e6e6;"></div>
<div style="left:286px;top:327px;width:1px;height:16px;background:#e6e6e6;"></div>
<div style="left:288px;top:326px;width:1px;height:17px;background:#ffffff;"></div>
<div style="left:289px;top:326px;width:1px;height:17px;background:#a0a0a0;"></div>
<div style="left:290px;top:326px;width:1px;height:17px;background:#a8a8a8;"></div>
<div style="left:173px;top:343px;width:118px;height:1px;background:#a0a0a0;"></div>
<div style="left:291px;top:326px;width:75px;height:17px;background:#ffffff;"></div>
<div style="left:367px;top:326px;width:58px;height:17px;background:#ffffff;"></div>
<div style="left:426px;top:326px;width:59px;height:17px;background:#fffaee;"></div>
<div style="left:291px;top:343px;width:194px;height:1px;background:#d8d8d8;"></div>
<div style="left:366px;top:326px;width:1px;height:18px;background:#d8d8d8;"></div>
<div style="left:425px;top:326px;width:1px;height:18px;background:#d8d8d8;"></div>
<span style="left:223.04px;top:329px;font-weight:normal;font-size:10.0px;color:#000;transform:scaleX(0.9576);transform-origin:0 0">Rate for Conc.:</span>
<span style="left:326.05px;top:329px;font-weight:normal;font-size:10.0px;color:#000;transform:scaleX(0.9400);transform-origin:0 0">0</span>
<span style="left:380.05px;top:329px;font-weight:normal;font-size:10.0px;color:#000;transform:scaleX(0.9364);transform-origin:0 0">mg/L/yr</span>
<div style="left:173px;top:344px;width:116px;height:18px;background:#f0f0f0;"></div>
<div style="left:173px;top:344px;width:115px;height:1px;background:#ffffff;"></div>
<div style="left:173px;top:344px;width:1px;height:18px;background:#ffffff;"></div>
<div style="left:174px;top:361px;width:113px;height:1px;background:#e6e6e6;"></div>
<div style="left:286px;top:345px;width:1px;height:17px;background:#e6e6e6;"></div>
<div style="left:288px;top:344px;width:1px;height:18px;background:#ffffff;"></div>
<div style="left:289px;top:344px;width:1px;height:18px;background:#a0a0a0;"></div>
<div style="left:290px;top:344px;width:1px;height:18px;background:#a8a8a8;"></div>
<div style="left:173px;top:362px;width:118px;height:1px;background:#a0a0a0;"></div>
<div style="left:291px;top:344px;width:75px;height:18px;background:#ffffff;"></div>
<div style="left:367px;top:344px;width:58px;height:18px;background:#ffffff;"></div>
<div style="left:426px;top:344px;width:59px;height:18px;background:#ffffff;"></div>
<div style="left:291px;top:362px;width:194px;height:1px;background:#d8d8d8;"></div>
<div style="left:366px;top:344px;width:1px;height:19px;background:#d8d8d8;"></div>
<div style="left:425px;top:344px;width:1px;height:19px;background:#d8d8d8;"></div>
<span style="left:215.70px;top:348px;font-weight:normal;font-size:10.0px;color:#000;transform:scaleX(0.8938);transform-origin:0 0">Volume Collected:</span>
<span style="left:321.30px;top:348px;font-weight:normal;font-size:10.0px;color:#000;transform:scaleX(1.0143);transform-origin:0 0">0.3</span>
<span style="left:387.85px;top:348px;font-weight:normal;font-size:10.0px;color:#000;transform:scaleX(0.9000);transform-origin:0 0">m/a</span>
<span style="left:452.55px;top:348px;font-weight:normal;font-size:10.0px;color:#000;transform:scaleX(0.9400);transform-origin:0 0">0</span>
<div style="left:173px;top:363px;width:116px;height:18px;background:#f0f0f0;"></div>
<div style="left:173px;top:363px;width:115px;height:1px;background:#ffffff;"></div>
<div style="left:173px;top:363px;width:1px;height:18px;background:#ffffff;"></div>
<div style="left:174px;top:380px;width:113px;height:1px;background:#e6e6e6;"></div>
<div style="left:286px;top:364px;width:1px;height:17px;background:#e6e6e6;"></div>
<div style="left:288px;top:363px;width:1px;height:18px;background:#ffffff;"></div>
<div style="left:289px;top:363px;width:1px;height:18px;background:#a0a0a0;"></div>
<div style="left:290px;top:363px;width:1px;height:18px;background:#a8a8a8;"></div>
<div style="left:173px;top:381px;width:118px;height:1px;background:#a0a0a0;"></div>
<div style="left:291px;top:363px;width:75px;height:18px;background:#ffffff;"></div>
<div style="left:367px;top:363px;width:58px;height:18px;background:#fffaee;"></div>
<div style="left:426px;top:363px;width:59px;height:18px;background:#fffaee;"></div>
<div style="left:291px;top:381px;width:194px;height:1px;background:#d8d8d8;"></div>
<div style="left:366px;top:363px;width:1px;height:19px;background:#d8d8d8;"></div>
<div style="left:425px;top:363px;width:1px;height:19px;background:#d8d8d8;"></div>
<span style="left:184.79px;top:366px;font-weight:normal;font-size:10.0px;color:#000;transform:scaleX(0.9062);transform-origin:0 0">Finite Mass Specification:</span>
<span style="left:304.10px;top:366px;font-weight:normal;font-size:10.0px;color:#000;transform:scaleX(0.9531);transform-origin:0 0">Ref. Height</span>
<div style="left:173px;top:380px;width:312px;height:1px;background:#b0b0b0;"></div>
<div style="left:172px;top:381px;width:314px;height:1px;background:#9494d4;"></div>
<div style="left:172px;top:383px;width:314px;height:1px;background:#c0c0c0;"></div>
<div style="left:172px;top:383px;width:1px;height:22px;background:#88c8c8;"></div>
<div style="left:485px;top:383px;width:1px;height:22px;background:#9494d4;"></div>
<div style="left:173px;top:384px;width:116px;height:18px;background:#f0f0f0;"></div>
<div style="left:173px;top:384px;width:115px;height:1px;background:#ffffff;"></div>
<div style="left:288px;top:384px;width:1px;height:18px;background:#ffffff;"></div>
<div style="left:289px;top:384px;width:1px;height:18px;background:#a0a0a0;"></div>
<div style="left:290px;top:384px;width:1px;height:18px;background:#a8a8a8;"></div>
<div style="left:291px;top:384px;width:75px;height:18px;background:#0066cc;"></div>
<div style="left:367px;top:384px;width:58px;height:18px;background:#ffffff;"></div>
<div style="left:426px;top:384px;width:59px;height:18px;background:#fffaee;"></div>
<div style="left:366px;top:384px;width:1px;height:19px;background:#d8d8d8;"></div>
<div style="left:425px;top:384px;width:1px;height:19px;background:#d8d8d8;"></div>
<div style="left:173px;top:402px;width:312px;height:1px;background:#a0a0a0;"></div>
<div style="left:172px;top:403px;width:314px;height:1px;background:#c8e4e4;"></div>
<div style="left:172px;top:404px;width:314px;height:1px;background:#88c8c8;"></div>
<span style="left:185.75px;top:388px;font-weight:normal;font-size:10.0px;color:#000;transform:scaleX(0.9481);transform-origin:0 0">Ref. Height of Leachate:</span>
<span style="left:321.60px;top:388px;font-weight:normal;font-size:10.0px;color:#ffffff;transform:scaleX(0.9714);transform-origin:0 0">7.5</span>
<span style="left:392.10px;top:388px;font-weight:normal;font-size:10.0px;color:#000;transform:scaleX(0.8500);transform-origin:0 0">m</span>
<div style="left:489px;top:151px;width:265px;height:1px;background:#ffffff;"></div>
<div style="left:489px;top:151px;width:1px;height:28px;background:#ffffff;"></div>
<div style="left:753px;top:151px;width:1px;height:29px;background:#808080;"></div>
<div style="left:489px;top:179px;width:265px;height:1px;background:#a0a0a0;"></div>
<div style="left:489px;top:181px;width:265px;height:1px;background:#ffffff;"></div>
<div style="left:489px;top:181px;width:1px;height:344px;background:#ffffff;"></div>
<div style="left:754px;top:151px;width:1px;height:374px;background:#e8e8e8;"></div>
<span style="left:529.54px;top:158px;font-weight:normal;font-size:10.0px;color:#000;transform:scaleX(0.9587);transform-origin:0 0">Increment:</span>
<div style="left:579px;top:155px;width:49px;height:17px;background:#fffaee;"></div>
<div style="left:579px;top:155px;width:49px;height:1px;background:#a0a0a0;"></div>
<div style="left:579px;top:155px;width:1px;height:17px;background:#a0a0a0;"></div>
<div style="left:580px;top:156px;width:47px;height:1px;background:#696969;"></div>
<div style="left:580px;top:156px;width:1px;height:15px;background:#696969;"></div>
<div style="left:579px;top:171px;width:49px;height:1px;background:#ffffff;"></div>
<div style="left:627px;top:155px;width:1px;height:17px;background:#ffffff;"></div>
<span style="left:581.75px;top:158px;font-weight:normal;font-size:10.0px;color:#000;transform:scaleX(0.7500);transform-origin:0 0">1</span>
<div style="left:637px;top:153px;width:104px;height:1px;background:#ffffff;"></div>
<div style="left:637px;top:153px;width:1px;height:22px;background:#ffffff;"></div>
<div style="left:641px;top:155px;width:1px;height:19px;background:#a0a0a0;"></div>
<div style="left:637px;top:175px;width:104px;height:1px;background:#a0a0a0;"></div>
<div style="left:740px;top:153px;width:1px;height:23px;background:#a0a0a0;"></div>
<svg style="position:absolute;left:652.6px;top:159px;overflow:visible" width="10" height="11" viewBox="0 0 10 11"><rect x="0" y="0" width="2" height="10.5" fill="#4646c0"/><path d="M2 5.25 L8 0 L8 10.5 Z" fill="#00003c"/></svg>
<svg style="position:absolute;left:675.6px;top:159px;overflow:visible" width="8" height="11" viewBox="0 0 8 11"><path d="M0 5.25 L6.5 0 L6.5 10.5 Z" fill="#00003c"/><rect x="6" y="0" width="0.8" height="10.5" fill="#3a5ad0"/></svg>
<svg style="position:absolute;left:700.6px;top:159px;overflow:visible" width="8" height="11" viewBox="0 0 8 11"><path d="M0 0 L6 5.25 L0 10.5 Z" fill="#00003c"/></svg>
<svg style="position:absolute;left:721.5px;top:159px;overflow:visible" width="10" height="11" viewBox="0 0 10 11"><path d="M0 0 L6 5.25 L0 10.5 Z" fill="#00003c"/><rect x="6.3" y="0" width="1.3" height="10.5" fill="#1c3c9c"/></svg>
</body></html>
